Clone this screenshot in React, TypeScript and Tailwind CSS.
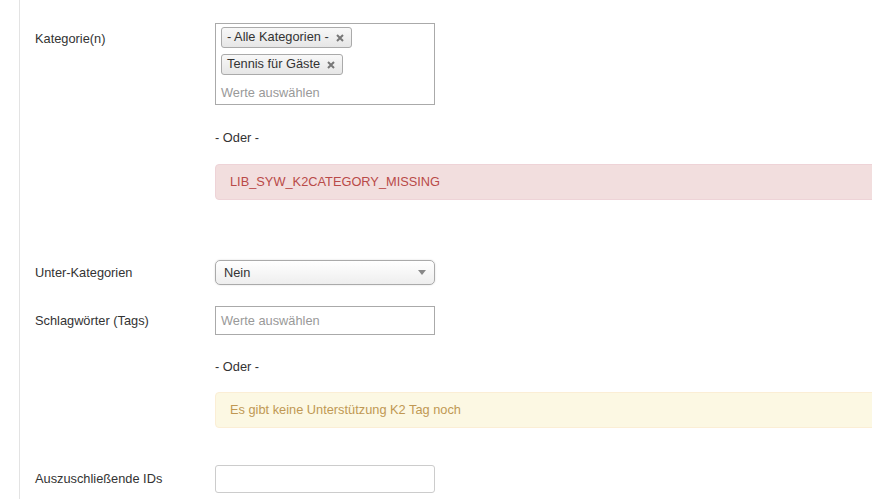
import React from "react";

function Tag({ label }: { label: string }) {
  return (
    <span className="inline-flex items-center h-[21px] pl-[5px] pr-[7px] border border-[#aaa] rounded-[3px] bg-gradient-to-b from-[#f8f8f8] to-[#e6e6e6] text-[#333] leading-none">
      {label}
      <svg width="8" height="8" viewBox="0 0 8 8" className="ml-[7px]">
        <path d="M1 1L7 7M7 1L1 7" stroke="#777" strokeWidth="2" />
      </svg>
    </span>
  );
}

function Label({ children }: { children: React.ReactNode }) {
  return <div className="w-[180px] shrink-0 text-[#333]">{children}</div>;
}

export default function App() {
  return (
    <div
      className="w-[872px] h-[499px] overflow-hidden bg-white text-[12.8px] text-[#333]"
      style={{ fontFamily: '"Liberation Sans", Arial, sans-serif' }}
    >
      <div className="ml-[19px] h-full border-l border-[#e3e3e3] pl-[15px]">
        {/* Kategorie(n) */}
        <div className="flex pt-[23px]">
          <Label>
            <div className="pt-[6px]">Kategorie(n)</div>
          </Label>
          <div className="w-[220px] h-[82px] border border-[#aaa] px-[5px] pt-[3px] flex flex-col items-start gap-[6px]">
            <Tag label="- Alle Kategorien -" />
            <Tag label="Tennis für Gäste" />
            <div className="text-[#999] leading-none mt-[6px]">Werte auswählen</div>
          </div>
        </div>

        <div className="ml-[180px] mt-[27px] leading-none">- Oder -</div>

        <div className="ml-[180px] mt-[19px] w-[700px] h-[36px] flex items-center pl-[14px] bg-[#f2dede] border border-[#eed3d7] rounded-[4px] text-[#b94a48]">
          LIB_SYW_K2CATEGORY_MISSING
        </div>

        {/* Unter-Kategorien */}
        <div className="flex items-center mt-[60px]">
          <Label>Unter-Kategorien</Label>
          <div className="w-[220px] h-[25px] flex items-center justify-between pl-[8px] pr-[6px] border border-[#aaa] rounded-[5px] bg-gradient-to-b from-white to-[#eee] shadow-[0_0_2px_rgba(0,0,0,0.15)]">
            <span>Nein</span>
            <svg width="8" height="5" viewBox="0 0 8 5" className="mr-[2px]">
              <path d="M0 0h8L4 5z" fill="#888" />
            </svg>
          </div>
        </div>

        {/* Schlagwörter */}
        <div className="flex items-center mt-[21px]">
          <Label>Schlagwörter (Tags)</Label>
          <div className="w-[220px] h-[29px] flex items-center pl-[5px] border border-[#aaa] text-[#999]">
            Werte auswählen
          </div>
        </div>

        <div className="ml-[180px] mt-[26px] leading-none">- Oder -</div>

        <div className="ml-[180px] mt-[18px] w-[700px] h-[36px] flex items-center pl-[14px] bg-[#fcf8e3] border border-[#fbeed5] rounded-[4px] text-[#c09853]">
          Es gibt keine Unterstützung K2 Tag noch
        </div>

        {/* Auszuschließende IDs */}
        <div className="flex items-center mt-[37px]">
          <Label>Auszuschließende IDs</Label>
          <div className="w-[220px] h-[28px] border border-[#ccc] rounded-[3px] bg-white" />
        </div>
      </div>
    </div>
  );
}
